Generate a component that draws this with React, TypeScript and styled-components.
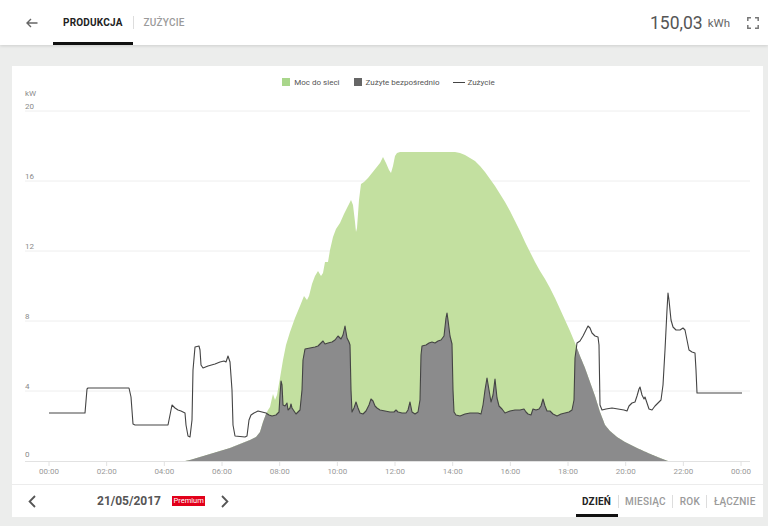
import React, { useMemo } from 'react';
import styled, { createGlobalStyle } from 'styled-components';

type Pt = [number, number];

const GlobalStyle = createGlobalStyle`
  html, body {
    margin: 0;
    padding: 0;
    background: #ecedec;
    font-family: Roboto, "Liberation Sans", Arial, sans-serif;
  }
`;

const BASE = 461;
const X0 = 49;
const HOUR = 57.67 / 2;

// chart coordinates are page pixels; the svg group is shifted back by the card offset
const consumption: Pt[] = [
  [49,413],[85,413],[87,389],[88,388],[129,388],[131,397],[133,424],[135,425],[168,425],[170,415],[172,405],[175,408],[178,410],[181,411],[183,412],[185,413],[186,425],[188,436],[190,437],[192,420],[193,370],[195,347],[199,346],[200,350],[201,365],[203,368],[208,366],[215,364],[220,362],[224,361],[226,362],[228,356],[230,362],[232,390],[233,425],[235,436],[245,437],[247,436],[249,420],[251,415],[254,413],[258,411],[262,412],[266,413],[269,415],[272,416],[276,415],[279,412],[280,395],[281,381],[282,385],[283,405],[285,406],[287,403],[288,410],[290,408],[291,404],[292,408],[294,411],[296,414],[298,412],[300,410],[302,390],[303,360],[305,349],[310,348],[315,347],[318,346],[321,343],[323,341],[325,344],[328,343],[332,342],[335,340],[338,336],[341,339],[343,335],[345,326],[347,338],[349,342],[350,345],[351,390],[352,412],[354,408],[356,402],[358,408],[360,413],[363,414],[366,411],[369,405],[371,399],[373,401],[375,406],[377,408],[380,410],[385,411],[390,412],[394,412],[396,410],[398,412],[402,413],[406,413],[408,410],[410,402],[412,412],[415,414],[418,412],[420,400],[421,355],[422,346],[426,345],[429,343],[432,342],[435,343],[438,341],[441,340],[444,336],[446,318],[447,313],[448,320],[450,336],[452,344],[453,390],[454,412],[456,415],[460,416],[465,414],[470,413],[478,413],[481,414],[483,405],[485,390],[487,378],[489,390],[491,402],[493,395],[495,379],[497,398],[499,406],[502,409],[505,413],[510,411],[515,410],[520,410],[524,409],[526,412],[528,414],[531,415],[533,409],[536,410],[539,409],[541,406],[543,399],[545,406],[547,411],[550,411],[553,414],[557,416],[561,414],[565,413],[569,412],[572,410],[574,400],[575,358],[577,343],[580,341],[583,336],[586,330],[588,326],[590,328],[592,333],[595,336],[598,337],[599,345],[600,405],[602,410],[606,409],[612,408],[618,409],[624,410],[627,411],[629,406],[632,403],[635,402],[637,396],[639,389],[640,387],[642,395],[644,399],[645,397],[647,403],[649,409],[652,410],[655,406],[658,403],[661,400],[663,385],[665,350],[667,310],[668,293],[669,300],[671,320],[673,327],[676,330],[680,330],[683,328],[685,330],[687,340],[689,350],[692,352],[695,353],[696,370],[697,393],[742,393],
];

const production: Pt[] = [
  [49,461],[185,461],[190,460],[200,457],[210,454],[220,451],[230,448],[240,444],[250,440],[256,437],[260,432],[263,422],[266,414],[268,410],[270,407],[272,398],[273,394],[275,400],[277,395],[280,378],[283,360],[286,345],[290,332],[295,318],[300,306],[304,296],[307,300],[309,296],[312,284],[315,276],[318,271],[321,276],[323,273],[325,262],[328,262],[330,250],[333,237],[336,229],[340,223],[344,214],[348,206],[351,200],[353,205],[355,222],[356,232],[357,228],[359,200],[361,184],[364,182],[368,178],[372,173],[376,168],[380,163],[383,157],[386,163],[389,170],[391,173],[393,166],[395,156],[397,153],[400,152],[455,152],[460,153],[465,155],[470,158],[475,161],[480,166],[485,172],[490,179],[495,186],[500,194],[505,202],[510,211],[515,221],[520,231],[525,242],[530,252],[535,262],[540,271],[545,279],[550,288],[555,298],[560,309],[565,320],[570,331],[575,343],[580,356],[585,368],[590,382],[595,396],[600,412],[605,425],[610,431],[617,437],[625,442],[637,448],[648,453],[660,458],[668,461],[742,461],
];

const interp = (pts: Pt[], x: number) => {
  if (x <= pts[0][0]) return pts[0][1];
  for (let i = 1; i < pts.length; i++) {
    if (x <= pts[i][0]) {
      const [xa, ya] = pts[i - 1];
      const [xb, yb] = pts[i];
      return ya + ((yb - ya) * (x - xa)) / (xb - xa);
    }
  }
  return pts[pts.length - 1][1];
};

const Header = styled.header`
  position: relative;
  z-index: 1;
  height: 45px;
  display: flex;
  align-items: stretch;
  padding: 0 9px 0 26px;
  background: #fff;
  box-shadow: 0 1px 3px rgba(0, 0, 0, 0.13);
`;

const BackButton = styled.div`
  display: flex;
  align-items: center;
  margin-right: 15px;
  color: #666;
`;

const TabGroup = styled.nav`
  display: flex;
  align-items: stretch;
`;

const Tab = styled.div<{ $active?: boolean }>`
  display: flex;
  align-items: center;
  padding: 0 10px;
  border-top: 3px solid transparent;
  border-bottom: 3px solid ${p => (p.$active ? '#111' : 'transparent')};
  font-size: 10px;
  font-weight: ${p => (p.$active ? 700 : 500)};
  letter-spacing: 0.2px;
  color: ${p => (p.$active ? '#222' : '#9a9a9a')};
`;

const TabDivider = styled.span`
  align-self: center;
  width: 1px;
  height: 13px;
  background: #ddd;
`;

const HeaderRight = styled.div`
  margin-left: auto;
  display: flex;
  align-items: center;
`;

const Total = styled.span`
  font-size: 17.5px;
  color: #555;
`;

const Unit = styled.span`
  margin-left: 5px;
  font-size: 11.5px;
  color: #666;
`;

const IconButton = styled.div`
  display: flex;
  margin-left: 17px;
  color: #777;
`;

const Card = styled.section`
  margin: 21px 5px 0 12px;
  height: 451px;
  display: flex;
  flex-direction: column;
  background: #fff;
`;

const Legend = styled.div`
  display: flex;
  justify-content: center;
  align-items: center;
  gap: 14px;
  height: 12px;
  margin-top: 10px;
  padding-left: 2px;
  font-size: 8px;
  color: #555;
`;

const LegendItem = styled.div`
  display: flex;
  align-items: center;
  gap: 4px;
`;

const Swatch = styled.span<{ $color: string }>`
  width: 8px;
  height: 8px;
  background: ${p => p.$color};
`;

const LineSwatch = styled.span`
  width: 12px;
  height: 1px;
  margin-right: -2px;
  background: #444;
`;

const ChartSvg = styled.svg`
  display: block;
  width: 751px;
  height: 396px;
  font-family: Roboto, "Liberation Sans", Arial, sans-serif;
`;

const Footer = styled.footer`
  flex: 1;
  display: flex;
  align-items: stretch;
  padding: 0 1px 0 16px;
  border-top: 1px solid #ececec;
`;

const DateNav = styled.div`
  display: flex;
  align-items: center;
`;

const NavButton = styled.div`
  display: flex;
  color: #555;
`;

const DateText = styled.span`
  margin-left: 61px;
  font-size: 12px;
  font-weight: 700;
  color: #555;
`;

const Badge = styled.span`
  margin: 0 16px 0 11px;
  padding: 0 1.5px;
  height: 10px;
  line-height: 10px;
  background: #e2001a;
  color: #fff;
  font-size: 7.5px;
`;

const PeriodTabs = styled.nav`
  margin-left: auto;
  display: flex;
  align-items: stretch;
`;

const PeriodTab = styled(Tab)`
  padding: 0 6.5px;
  font-size: 10px;
  letter-spacing: 0.2px;
`;

const hours = ['00:00', '02:00', '04:00', '06:00', '08:00', '10:00', '12:00', '14:00', '16:00', '18:00', '20:00', '22:00', '00:00'];
const yTicks = [0, 4, 8, 12, 16, 20];

const Chart = () => {
  const { greenPath, grayPath, linePath } = useMemo(() => {
    const green = production.map(([x, y]) => `${x},${y}`).join(' L');
    const gray: string[] = [];
    for (let x = 49; x <= 742; x += 0.5) {
      const y = Math.max(interp(production, x), interp(consumption, x));
      gray.push(`${x},${y.toFixed(2)}`);
    }
    return {
      greenPath: `M${green} Z`,
      grayPath: `M49,${BASE} L${gray.join(' L')} L742,${BASE} Z`,
      linePath: `M${consumption.map(([x, y]) => `${x},${y}`).join(' L')}`,
    };
  }, []);

  return (
    <ChartSvg viewBox="0 0 751 396">
      <g transform="translate(-12 -88)">
        <text x={25} y={96} fontSize={8} fill="#8a8a8a">kW</text>
        {yTicks.map(v => {
          const y = BASE - v * 17.5;
          return (
            <g key={v}>
              {v > 0 && <line x1={25} x2={750} y1={y} y2={y} stroke="#eeeeee" strokeWidth={1} />}
              <text x={25} y={y - (v === 0 ? 4 : 2)} fontSize={8} fill="#8a8a8a">{v}</text>
            </g>
          );
        })}
        <path d={greenPath} fill="#c3e0a0" />
        <path d={grayPath} fill="#8b8b8c" />
        <path d={linePath} fill="none" stroke="#444" strokeWidth={1.1} strokeLinejoin="round" />
        <line x1={25} x2={750} y1={BASE + 0.5} y2={BASE + 0.5} stroke="#e2e2e2" />
        {hours.map((t, i) => {
          const x = X0 + i * 2 * HOUR;
          return (
            <g key={i}>
              <line x1={x} x2={x} y1={BASE} y2={BASE + 5} stroke="#e2e2e2" />
              <text x={x} y={474} fontSize={8} fill="#999" textAnchor="middle">{t}</text>
            </g>
          );
        })}
      </g>
    </ChartSvg>
  );
};

const App = () => (
  <>
    <GlobalStyle />
    <Header>
      <BackButton>
        <svg width="12" height="10" viewBox="0 0 12 10" fill="none" stroke="currentColor" strokeWidth="1.4">
          <path d="M11.5 5H1.2M5 1L1 5l4 4" />
        </svg>
      </BackButton>
      <TabGroup>
        <Tab $active>PRODUKCJA</Tab>
        <TabDivider />
        <Tab>ZUŻYCIE</Tab>
      </TabGroup>
      <HeaderRight>
        <Total>150,03</Total>
        <Unit>kWh</Unit>
        <IconButton>
          <svg width="12" height="12" viewBox="0 0 12 12" fill="none" stroke="currentColor" strokeWidth="1.5">
            <path d="M0.8 4V0.8H4M8 0.8h3.2V4M11.2 8v3.2H8M4 11.2H0.8V8" />
          </svg>
        </IconButton>
      </HeaderRight>
    </Header>
    <Card>
      <Legend>
        <LegendItem><Swatch $color="#a9d68b" />Moc do sieci</LegendItem>
        <LegendItem><Swatch $color="#666" />Zużyte bezpośrednio</LegendItem>
        <LegendItem><LineSwatch />Zużycie</LegendItem>
      </Legend>
      <Chart />
      <Footer>
        <DateNav>
          <NavButton>
            <svg width="8" height="13" viewBox="0 0 8 13" fill="none" stroke="currentColor" strokeWidth="1.8">
              <path d="M7 1L1.6 6.5 7 12" />
            </svg>
          </NavButton>
          <DateText>21/05/2017</DateText>
          <Badge>Premium</Badge>
          <NavButton>
            <svg width="8" height="13" viewBox="0 0 8 13" fill="none" stroke="currentColor" strokeWidth="1.8">
              <path d="M1 1l5.4 5.5L1 12" />
            </svg>
          </NavButton>
        </DateNav>
        <PeriodTabs>
          <PeriodTab $active>DZIEŃ</PeriodTab>
          <TabDivider />
          <PeriodTab>MIESIĄC</PeriodTab>
          <TabDivider />
          <PeriodTab>ROK</PeriodTab>
          <TabDivider />
          <PeriodTab>ŁĄCZNIE</PeriodTab>
        </PeriodTabs>
      </Footer>
    </Card>
  </>
);

export default App;
